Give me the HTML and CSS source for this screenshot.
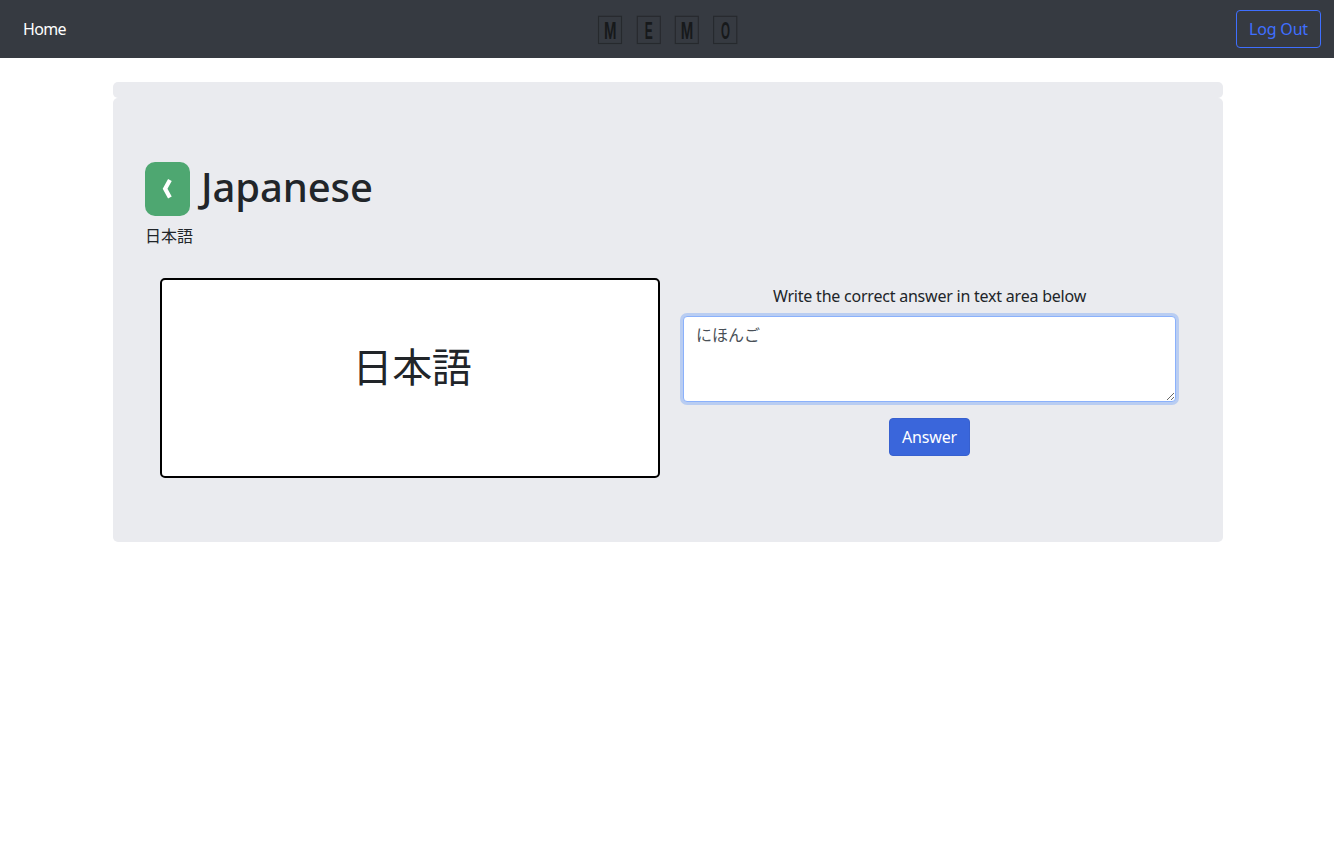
FILE: index.html
```
<!DOCTYPE html>
<html lang="en">
<head>
<meta charset="utf-8">
<title>Memo</title>
<link rel="stylesheet" href="styles.css">
</head>
<body>
<nav class="navbar">
  <a class="nav-link">Home</a>
  <svg class="logo" width="144" height="40" viewBox="-1 -5 144 40" role="img" aria-label="MEMO">
    <g class="logo-box">
      <rect x="1.5" y="2.3" width="23" height="27.2"/>
      <rect x="40.3" y="2.3" width="23" height="27.2"/>
      <rect x="78.3" y="2.3" width="23" height="27.2"/>
      <rect x="116.6" y="2.3" width="23.2" height="27.2"/>
    </g>
    <g class="logo-letter">
      <text x="7" y="24.8" textLength="12.5" lengthAdjust="spacingAndGlyphs">M</text>
      <text x="47.8" y="24.8" textLength="8" lengthAdjust="spacingAndGlyphs">E</text>
      <text x="83.8" y="24.8" textLength="12.5" lengthAdjust="spacingAndGlyphs">M</text>
      <text x="123.9" y="24.8" textLength="9" lengthAdjust="spacingAndGlyphs">O</text>
    </g>
  </svg>
  <button class="btn btn-outline">Log Out</button>
</nav>
<main class="container">
  <div class="jumbotron strip"></div>
  <section class="jumbotron deck">
    <header class="deck-head">
      <button class="back" aria-label="Back">
        <svg class="chevron" width="14" height="20" viewBox="0 0 14 20"><path d="M8.9 1 4.1 9.8l4.8 8.8"/></svg>
      </button>
      <h1 class="title">Japanese</h1>
    </header>
    <p class="subtitle">日本語</p>
    <div class="quiz">
      <div class="card"><span>日本語</span></div>
      <form class="answer">
        <label class="prompt" for="answer">Write the correct answer in text area below</label>
        <textarea class="field" id="answer">にほんご</textarea>
        <button class="btn btn-primary" type="button">Answer</button>
      </form>
    </div>
  </section>
</main>
</body>
</html>
```
FILE: styles.css
```
* { box-sizing: border-box; }
body {
  margin: 0;
  background: #fff;
  color: #212529;
  font: 16px/24px "Noto Sans", "Noto Sans CJK JP", sans-serif;
}
button, textarea { font: inherit; margin: 0; }
.navbar {
  display: grid;
  grid-template-columns: 1fr 144px 1fr;
  align-items: center;
  height: 58px;
  padding: 0 13px 0 15px;
  background: #363a41;
}
.nav-link { padding: 0 8px; color: #fff; letter-spacing: -.7px; }
.logo { display: block; }
.logo-box { fill: none; stroke: #26292d; stroke-width: 1.1; }
.logo-letter { fill: #17191b; font: bold 24.5px "Liberation Sans", sans-serif; }
.btn {
  height: 38px;
  padding: 0;
  border: 1px solid;
  border-radius: 4px;
  text-align: center;
  white-space: nowrap;
}
.btn-outline {
  justify-self: end;
  width: 85px;
  background: transparent;
  border-color: #3f6fff;
  color: #3f6fff;
  letter-spacing: -.2px;
}
.btn-primary {
  width: 81px;
  margin-top: 16px;
  background: #3a66db;
  border-color: #3760cf;
  color: #fff;
  letter-spacing: -.2px;
}
.container { width: 1110px; margin: 24px 0 0 113px; }
.jumbotron { background: #eaebef; border-radius: 5px; }
.strip { height: 16px; }
.deck { height: 444px; padding: 64px 32px; }
.deck-head { display: flex; align-items: center; gap: 11px; height: 54px; }
.back {
  display: grid;
  place-items: center;
  width: 45px;
  height: 54px;
  padding: 0;
  border: 0;
  border-radius: 10px;
  background: #4ea771;
}
.chevron { fill: none; stroke: #fff; stroke-width: 4.2; }
.title {
  margin: 0;
  padding-bottom: 4px;
  font-size: 40px;
  line-height: 48px;
  font-weight: 500;
  letter-spacing: -.1px;
}
.subtitle { margin: 7px 0 31px; font-family: "Noto Sans CJK JP", sans-serif; }
.quiz { display: flex; gap: 23px; padding-left: 15px; }
.card {
  display: flex;
  justify-content: center;
  width: 500px;
  height: 200px;
  padding: 61px 0 0 4px;
  border: 2px solid #000;
  border-radius: 5px;
  background: #fff;
  font: 40px/48px "Noto Sans CJK JP", sans-serif;
  letter-spacing: -.3px;
}
.answer { display: flex; flex-direction: column; align-items: center; width: 493px; padding-top: 6px; }
.prompt { margin-bottom: 8px; white-space: nowrap; letter-spacing: -.22px; }
.field {
  display: block;
  width: 493px;
  height: 86px;
  padding: 5px 12px 6px;
  border: 1px solid #8bb1fb;
  border-radius: 4px;
  outline: 0;
  box-shadow: 0 0 0 3px #b9cdf2;
  background: #fff;
  color: #495057;
  font-family: "Noto Sans CJK JP", sans-serif;
  resize: vertical;
}
```
